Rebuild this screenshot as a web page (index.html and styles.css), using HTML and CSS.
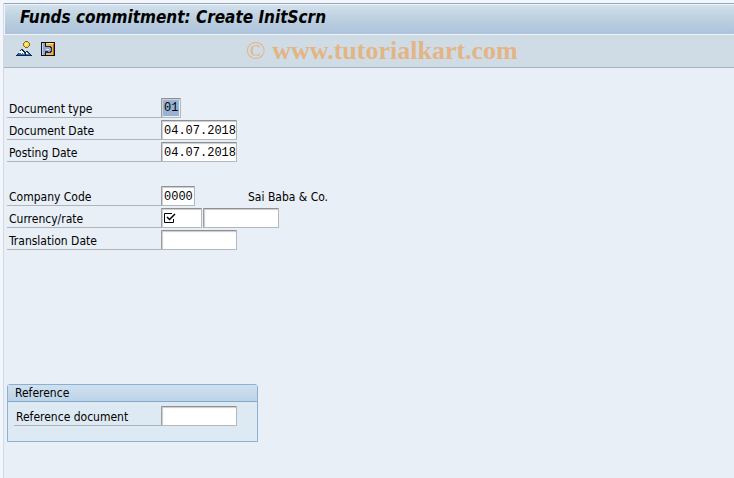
FILE: index.html
```
<!DOCTYPE html>
<html lang="en">
<head>
    <meta charset="utf-8">
    <title>Funds commitment: Create InitScrn</title>
    <link rel="stylesheet" href="styles.css">
</head>
<body>
    <div class="window">
        <header class="title-bar">
            <h1>Funds commitment: Create InitScrn</h1>
        </header>

        <div class="toolbar">
            <button type="button" class="tool" aria-label="Overview">
                <svg width="16" height="16" viewBox="0 0 16 16" shape-rendering="crispEdges">
                    <path d="M8 1h1v-1h3v1h1v1h1v3h-1v1h-1v1h-3v-1h-1v-1h-1v-3h1z" fill="#7a6a30"/>
                    <path d="M9 1h3v1h1v3h-1v1h-3v-1h-1v-3h1z" fill="#ffd83c"/>
                    <path d="M9 2h2v2h-2z" fill="#fff3a0"/>
                    <path d="M5 8h2v1h1v1h1v1h1v-1h2v1h1v1h1v1h1v1h1v1h-16v-1h1v-1h1v-1h1v-1h1v-2h1z" fill="#16263c"/>
                    <path d="M5 9h1v1h1v1h1v1h1v2h-7v-1h1v-1h1v-1h1z" fill="#2470c0"/>
                    <path d="M5 9h1v1h1v1h1v2h-1v-1h-1v1h-1v-1h-2v-1h1v-1h1z" fill="#fff"/>
                    <path d="M10 11h2v1h1v1h1v1h-4z" fill="#2f7fc8"/>
                    <path d="M10 11h1v1h1v1h-2z" fill="#fff"/>
                </svg>
            </button>
            <button type="button" class="tool" aria-label="Hold document">
                <svg width="14" height="14" viewBox="0 0 14 14" shape-rendering="crispEdges">
                    <path d="M0 0h14v14h-14z" fill="#111"/>
                    <path d="M1 1h3v12h-3z" fill="#8fa4d6"/>
                    <path d="M1 1h1v12h-1z" fill="#c4d0ee"/>
                    <path d="M5 1h8v12h-8z" fill="#f0b44c"/>
                    <path d="M5 1h7v1h-7z" fill="#ffe0a0"/>
                    <path d="M12 2h1v11h-1z" fill="#a8641c"/>
                    <path d="M4 4h6v1h1v5h-1v1h-6z" fill="#222a40"/>
                    <path d="M4 5h5v1h1v3h-1v1h-2v-1h-3z" fill="#8fa4d6"/>
                    <path d="M5 7h3v1h-3z" fill="#e8eefa"/>
                </svg>
            </button>
            <span class="watermark"><span class="copy">©</span> www.tutorialkart.com</span>
        </div>

        <form class="screen">
            <div class="block">
                <div class="row">
                    <label for="docType">Document type</label>
                    <input type="text" id="docType" class="w-2 selected" value="01">
                </div>
                <div class="row">
                    <label for="docDate">Document Date</label>
                    <input type="text" id="docDate" class="w-10" value="04.07.2018">
                </div>
                <div class="row">
                    <label for="postDate">Posting Date</label>
                    <input type="text" id="postDate" class="w-10" value="04.07.2018">
                </div>
            </div>

            <div class="block">
                <div class="row">
                    <label for="company">Company Code</label>
                    <input type="text" id="company" class="w-4" value="0000">
                    <output class="company-name" for="company">Sai Baba &amp; Co.</output>
                </div>
                <div class="row">
                    <label for="currency">Currency/rate</label>
                    <span class="required">
                        <input type="text" id="currency" class="w-5" required>
                        <svg class="mark" width="12" height="12" viewBox="0 0 12 12" fill="none" stroke="#000">
                            <path d="M8 1.500H.5v9h9V7"/>
                            <path d="M3 5l2.500 2.500L11 2" stroke-width="1.500"/>
                        </svg>
                    </span>
                    <input type="text" id="rate" class="w-10" aria-label="Rate">
                </div>
                <div class="row">
                    <label for="transDate">Translation Date</label>
                    <input type="text" id="transDate" class="w-10">
                </div>
            </div>

            <section class="group">
                <h2>Reference</h2>
                <div class="row">
                    <label for="refDoc">Reference document</label>
                    <input type="text" id="refDoc" class="w-10">
                </div>
            </section>
        </form>
    </div>
</body>
</html>
```
FILE: styles.css
```
* {
    box-sizing: border-box;
}

body {
    margin: 0;
    padding: 3px 0 0 3px;
    background-color: #f3f6fa;
    font-family: "DejaVu Sans Condensed", Tahoma, sans-serif;
    font-size: 12px;
    color: #000;
}

.window {
    min-height: calc(100vh - 3px);
    border-left: 1px solid #cfdbe6;
    background-color: #e8eff6;
}

/* Title and toolbar */
.title-bar {
    height: 31px;
    padding-left: 16px;
    border-top: 1px solid #94a8bc;
    background: linear-gradient(#d4e2ed, #bdd1e0 45%, #adc3dd);
    box-shadow: inset 1px 1px #eef4f9;
}

.title-bar h1 {
    margin: 0;
    font-size: 17px;
    font-style: italic;
    line-height: 27px;
}

.toolbar {
    display: flex;
    align-items: center;
    gap: 9px;
    height: 34px;
    padding: 0 12px;
    border-top: 1px solid #f0f5fa;
    border-bottom: 1px solid #a3b5c4;
    background-color: #cfdce6;
}

.tool {
    display: flex;
    padding: 0;
    margin-bottom: 4px;
    border: 0;
    background: none;
}

.watermark {
    margin-left: 182px;
    font-family: "Liberation Serif", serif;
    font-size: 26px;
    font-weight: bold;
    line-height: 32px;
    color: #e3b584;
    white-space: nowrap;
}

.watermark .copy {
    font-weight: normal;
}

/* Form rows */
.screen {
    padding: 30px 3px;
}

.block {
    display: flex;
    flex-direction: column;
    gap: 2px;
    margin-bottom: 24px;
}

.row {
    display: flex;
    height: 20px;
}

.row label {
    width: 154px;
    padding-left: 2px;
    border-bottom: 1px solid #b0b4b8;
    line-height: 22px;
}

.row input {
    height: 20px;
    padding: 1px 0 0 2px;
    border: 1px solid #b4b8bc;
    border-top-color: #8c9094;
    border-left-color: #9a9ea2;
    border-radius: 1px;
    outline: 0;
    background-color: #fff;
    box-shadow: inset 1px 1px 1px #c8ccd0;
    font-family: "Liberation Mono", monospace;
    font-size: 12px;
    color: #000;
}

.row .w-2 { width: 20px; }
.row .w-4 { width: 34px; }
.row .w-5 { width: 41px; }
.row .w-10 { width: 76px; }

.row .selected {
    padding: 1px;
    background-color: #98b2d3;
    background-clip: content-box;
    line-height: 18px;
    text-indent: 1px;
}

.company-name {
    margin-left: 53px;
    line-height: 22px;
}

.required {
    position: relative;
    display: flex;
    margin-right: 1px;
}

.mark {
    position: absolute;
    top: 4px;
    left: 3px;
}

/* Reference box */
.group {
    width: 251px;
    margin-top: 134px;
    padding-bottom: 15px;
    border: 1px solid #8fafcf;
    border-radius: 3px 3px 0 0;
    background-color: #deeaf3;
}

.group h2 {
    height: 17px;
    margin: 0 0 4px;
    padding-left: 7px;
    border-bottom: 1px solid #86a6c8;
    background: linear-gradient(#cfe1ef, #bbd4e7);
    font-size: 12px;
    font-weight: normal;
    line-height: 16px;
}

.group .row {
    padding-left: 6px;
}

.group label {
    width: 147px;
}
```
